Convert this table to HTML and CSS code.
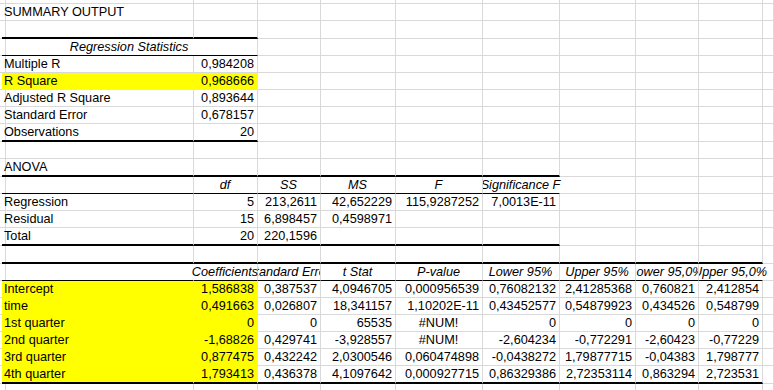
FILE: index.html
```html
<!DOCTYPE html>
<html>
<head>
<meta charset="utf-8">
<title>Summary Output</title>
<link rel="stylesheet" href="styles.css">
</head>
<body>
<div class="sheet">
  <div class="r r0"><div class="c"></div><div class="c"></div><div class="c"></div><div class="c"></div><div class="c"></div><div class="c"></div><div class="c"></div><div class="c"></div><div class="c"></div><div class="c"></div><div class="c"></div></div>
  <div class="r r17"><div class="c"></div><div class="c">SUMMARY OUTPUT</div><div class="c"></div><div class="c"></div><div class="c"></div><div class="c"></div><div class="c"></div><div class="c"></div><div class="c"></div><div class="c"></div><div class="c"></div></div>
  <div class="r r18"><div class="c"></div><div class="c tb"></div><div class="c tb"></div><div class="c"></div><div class="c"></div><div class="c"></div><div class="c"></div><div class="c"></div><div class="c"></div><div class="c"></div><div class="c"></div></div>
  <div class="r r17"><div class="c"></div><div class="c hd bb span2"><span>Regression Statistics</span></div><div class="c"></div><div class="c"></div><div class="c"></div><div class="c"></div><div class="c"></div><div class="c"></div><div class="c"></div><div class="c"></div></div>
  <div class="r r17"><div class="c"></div><div class="c">Multiple R</div><div class="c num">0,984208</div><div class="c"></div><div class="c"></div><div class="c"></div><div class="c"></div><div class="c"></div><div class="c"></div><div class="c"></div><div class="c"></div></div>
  <div class="r r17"><div class="c"></div><div class="c yel">R Square</div><div class="c num yel">0,968666</div><div class="c"></div><div class="c"></div><div class="c"></div><div class="c"></div><div class="c"></div><div class="c"></div><div class="c"></div><div class="c"></div></div>
  <div class="r r17"><div class="c"></div><div class="c">Adjusted R Square</div><div class="c num">0,893644</div><div class="c"></div><div class="c"></div><div class="c"></div><div class="c"></div><div class="c"></div><div class="c"></div><div class="c"></div><div class="c"></div></div>
  <div class="r r17"><div class="c"></div><div class="c">Standard Error</div><div class="c num">0,678157</div><div class="c"></div><div class="c"></div><div class="c"></div><div class="c"></div><div class="c"></div><div class="c"></div><div class="c"></div><div class="c"></div></div>
  <div class="r r18"><div class="c"></div><div class="c tb">Observations</div><div class="c num tb">20</div><div class="c"></div><div class="c"></div><div class="c"></div><div class="c"></div><div class="c"></div><div class="c"></div><div class="c"></div><div class="c"></div></div>
  <div class="r r17"><div class="c"></div><div class="c"></div><div class="c"></div><div class="c"></div><div class="c"></div><div class="c"></div><div class="c"></div><div class="c"></div><div class="c"></div><div class="c"></div><div class="c"></div></div>
  <div class="r r18"><div class="c"></div><div class="c tb">ANOVA</div><div class="c tb"></div><div class="c tb"></div><div class="c tb"></div><div class="c tb"></div><div class="c tb"></div><div class="c"></div><div class="c"></div><div class="c"></div><div class="c"></div></div>
  <div class="r r17"><div class="c"></div><div class="c bb"></div><div class="c hd bb"><span>df</span></div><div class="c hd bb"><span>SS</span></div><div class="c hd bb"><span>MS</span></div><div class="c hd bb"><span>F</span></div><div class="c hd bb nr clipl"><span>Significance F</span></div><div class="c"></div><div class="c"></div><div class="c"></div><div class="c"></div></div>
  <div class="r r17"><div class="c"></div><div class="c">Regression</div><div class="c num">5</div><div class="c num">213,2611</div><div class="c num">42,652229</div><div class="c num">115,9287252</div><div class="c num">7,0013E-11</div><div class="c"></div><div class="c"></div><div class="c"></div><div class="c"></div></div>
  <div class="r r17"><div class="c"></div><div class="c">Residual</div><div class="c num">15</div><div class="c num">6,898457</div><div class="c num">0,4598971</div><div class="c"></div><div class="c"></div><div class="c"></div><div class="c"></div><div class="c"></div><div class="c"></div></div>
  <div class="r r18"><div class="c"></div><div class="c tb">Total</div><div class="c num tb">20</div><div class="c num tb">220,1596</div><div class="c tb"></div><div class="c tb"></div><div class="c tb"></div><div class="c"></div><div class="c"></div><div class="c"></div><div class="c"></div></div>
  <div class="r r18"><div class="c"></div><div class="c tb"></div><div class="c tb"></div><div class="c tb"></div><div class="c tb"></div><div class="c tb"></div><div class="c tb"></div><div class="c tb"></div><div class="c tb"></div><div class="c tb"></div><div class="c"></div></div>
  <div class="r r17"><div class="c"></div><div class="c bb nr"></div><div class="c hd bb clipr"><span>Coefficients</span></div><div class="c hd bb clip"><span>Standard Error</span></div><div class="c hd bb"><span>t Stat</span></div><div class="c hd bb"><span>P-value</span></div><div class="c hd bb"><span>Lower 95%</span></div><div class="c hd bb"><span>Upper 95%</span></div><div class="c hd bb clip"><span>Lower 95,0%</span></div><div class="c hd bb nr clipl"><span>Upper 95,0%</span></div><div class="c"></div></div>
  <div class="r r17"><div class="c"></div><div class="c yel">Intercept</div><div class="c num yel">1,586838</div><div class="c num">0,387537</div><div class="c num">4,0946705</div><div class="c num">0,000956539</div><div class="c num">0,76082132</div><div class="c num">2,41285368</div><div class="c num">0,760821</div><div class="c num">2,412854</div><div class="c"></div></div>
  <div class="r r17"><div class="c"></div><div class="c yel">time</div><div class="c num yel">0,491663</div><div class="c num">0,026807</div><div class="c num">18,341157</div><div class="c num">1,10202E-11</div><div class="c num">0,43452577</div><div class="c num">0,54879923</div><div class="c num">0,434526</div><div class="c num">0,548799</div><div class="c"></div></div>
  <div class="r r17"><div class="c"></div><div class="c yel">1st quarter</div><div class="c num yel">0</div><div class="c num">0</div><div class="c num">65535</div><div class="c ctr">#NUM!</div><div class="c num">0</div><div class="c num">0</div><div class="c num">0</div><div class="c num">0</div><div class="c"></div></div>
  <div class="r r17"><div class="c"></div><div class="c yel">2nd quarter</div><div class="c num yel">-1,68826</div><div class="c num">0,429741</div><div class="c num">-3,928557</div><div class="c ctr">#NUM!</div><div class="c num">-2,604234</div><div class="c num">-0,772291</div><div class="c num">-2,60423</div><div class="c num">-0,77229</div><div class="c"></div></div>
  <div class="r r17"><div class="c"></div><div class="c yel">3rd quarter</div><div class="c num yel">0,877475</div><div class="c num">0,432242</div><div class="c num">2,0300546</div><div class="c num">0,060474898</div><div class="c num">-0,0438272</div><div class="c num">1,79877715</div><div class="c num">-0,04383</div><div class="c num">1,798777</div><div class="c"></div></div>
  <div class="r r18"><div class="c"></div><div class="c yel tb">4th quarter</div><div class="c num yel tb">1,793413</div><div class="c num tb">0,436378</div><div class="c num tb">4,1097642</div><div class="c num tb">0,000927715</div><div class="c num tb">0,86329386</div><div class="c num tb">2,72353114</div><div class="c num tb">0,863294</div><div class="c num tb">2,723531</div><div class="c"></div></div>
  <div class="r rend"><div class="c"></div><div class="c"></div><div class="c"></div><div class="c"></div><div class="c"></div><div class="c"></div><div class="c"></div><div class="c"></div><div class="c"></div><div class="c"></div><div class="c"></div></div>
</div>
</body>
</html>
```

FILE: styles.css
```css
html, body {
  margin: 0;
  padding: 0;
  background: #ffffff;
}

.sheet {
  font-family: "Liberation Sans", Arial, sans-serif;
  font-size: 12.7px;
  color: #000000;
  height: 390px;
  overflow: hidden;
}

.r {
  display: grid;
  grid-template-columns: 2px 192px 64px 63px 75px 87px 77px 76px 63px 64px 1fr;
}

.r0 { height: 4px; }
.r17 { height: 17px; }
.r18 { height: 18px; }
.rend { height: 20px; }

.c {
  box-sizing: border-box;
  border-right: 1px solid #d9d9d9;
  border-bottom: 1px solid #d9d9d9;
  padding: 1px 3px 0 2px;
  line-height: 15px;
  white-space: nowrap;
  overflow: hidden;
  min-width: 0;
}

.num { text-align: right; }
.ctr { text-align: center; }

.hd {
  font-style: italic;
  display: flex;
  justify-content: center;
  overflow: visible;
}

.hd span { flex: none; }

.span2 { grid-column: span 2; }

.yel {
  background: #ffff00;
  border-right-color: #ffff00;
  border-bottom-color: #ffff00;
}

.bb { border-bottom-color: #000000; }

.tb { border-bottom: 2px solid #000000; }

.nr { border-right-color: transparent; }

.clip { overflow: hidden; }
.clipl { clip-path: inset(-2px -80px -2px 0); }
.clipr { clip-path: inset(-2px 0 -2px -80px); }
```
